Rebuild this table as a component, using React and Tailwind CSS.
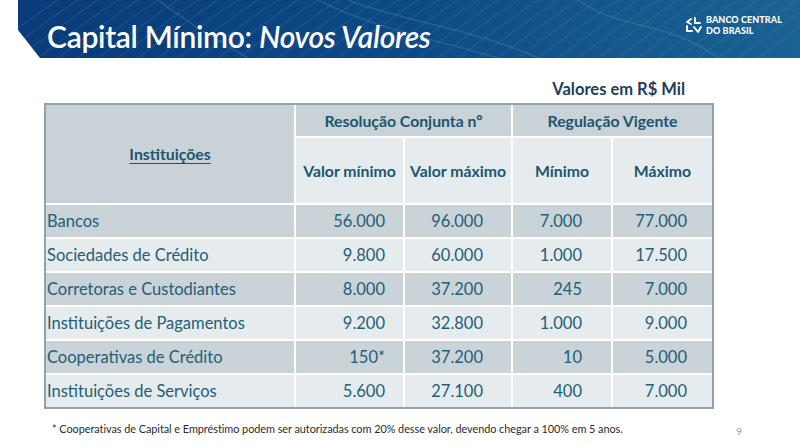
import React from "react";

const rows = [
  ["Bancos", "56.000", "96.000", "7.000", "77.000"],
  ["Sociedades de Crédito", "9.800", "60.000", "1.000", "17.500"],
  ["Corretoras e Custodiantes", "8.000", "37.200", "245", "7.000"],
  ["Instituições de Pagamentos", "9.200", "32.800", "1.000", "9.000"],
  ["Cooperativas de Crédito", "150*", "37.200", "10", "5.000"],
  ["Instituições de Serviços", "5.600", "27.100", "400", "7.000"],
];

function Logo() {
  return (
    <div className="flex items-center gap-[3px]">
      <svg width="18" height="18" viewBox="0 0 18 18" fill="none" stroke="white" strokeWidth="1.9" strokeLinecap="round" strokeLinejoin="round">
        <path d="M6 3 L2 6 L6 8" />
        <path d="M10 2 L10 7 L15 7" />
        <path d="M2 10 L2 15 L7 15" />
        <path d="M9 11 L13 16 L16 11" />
      </svg>
      <div className="flex flex-col text-white font-black text-[9px] tracking-[0.1px]" style={{ fontFamily: 'Lato, sans-serif' }}>
        <span className="leading-[11px]">BANCO CENTRAL</span>
        <span className="leading-[11px]">DO BRASIL</span>
      </div>
    </div>
  );
}

function Banner() {
  return (
    <div className="relative ml-[18px] h-[58px] overflow-hidden bg-gradient-to-r from-[#0a3a7a] via-[#0d4a85] to-[#1a6393] [clip-path:polygon(0_0,100%_0,100%_100%,22px_100%,0_30px)]">
      <svg className="absolute inset-0 w-full h-full" viewBox="0 0 782 58" preserveAspectRatio="none" fill="none">
        <g stroke="#4a86b8" strokeOpacity="0.35" strokeWidth="1">
          {Array.from({ length: 40 }).map((_, i) => (
            <path key={i} d={`M${i * 20 - 40} 58 Q ${i * 20 + 10} 20 ${i * 20 + 40} 0`} />
          ))}
        </g>
        <g stroke="#6aa2cc" strokeOpacity="0.25" strokeWidth="1.5">
          <path d="M300 0 C 360 30, 420 40, 480 58" />
          <path d="M330 0 C 380 20, 460 30, 520 58" />
          <path d="M560 0 C 600 30, 650 20, 700 58" />
          <path d="M140 0 C 180 30, 200 40, 230 58" />
        </g>
      </svg>
      <div className="relative flex items-center justify-between h-full pl-[29px] pr-[18px]">
        <h1 className="text-white text-[30px] leading-none pt-[13px] font-semibold tracking-[-0.3px]" style={{ fontFamily: 'Lato, "Open Sans", sans-serif' }}>
          Capital Mínimo: <span className="italic">Novos Valores</span>
        </h1>
        <div className="self-start pt-[14px]">
          <Logo />
        </div>
      </div>
    </div>
  );
}

export default function App() {
  const font = { fontFamily: 'Lato, "Open Sans", sans-serif' };
  const cell = "flex items-center text-[16.5px] text-[#225f79]";
  const hdr = "flex items-center justify-center font-bold text-[15.8px] text-[#1b5670]";
  const pads = ["pr-[18px]", "pr-[28px]", "pr-[29px]", "pr-[25px]"];
  return (
    <div className="w-[800px] h-[445px] bg-white overflow-hidden" style={font}>
      <Banner />
      <div className="flex justify-end w-[712px] pt-[21px] pb-[4px] pr-[27px]">
        <span className="font-bold text-[16.5px] text-[#1d3f58] leading-[20px]">Valores em R$ Mil</span>
      </div>
      <div className="ml-[44px] w-[670px] border-2 border-[#8da4ad] bg-white">
        <div className="grid grid-cols-[248px_107px_106px_98px_99px] grid-rows-[31px_65px_repeat(6,32px)] gap-[2px]">
          <div className={`${hdr} row-span-2 bg-[#c9d2d6] underline underline-offset-[3px]`}>Instituições</div>
          <div className={`${hdr} col-span-2 bg-[#c9d2d6]`}>Resolução Conjunta nº</div>
          <div className={`${hdr} col-span-2 bg-[#c9d2d6]`}>Regulação Vigente</div>
          <div className={`${hdr} bg-[#e6ebed]`}>Valor mínimo</div>
          <div className={`${hdr} bg-[#e6ebed]`}>Valor máximo</div>
          <div className={`${hdr} bg-[#e6ebed]`}>Mínimo</div>
          <div className={`${hdr} bg-[#e6ebed]`}>Máximo</div>
          {rows.map((r, i) => {
            const bg = i % 2 === 0 ? "bg-[#cad3d7]" : "bg-[#e6ebed]";
            return (
              <React.Fragment key={i}>
                <div className={`${cell} ${bg} pl-[1px]`}>{r[0]}</div>
                {r.slice(1).map((v, j) => (
                  <div key={j} className={`${cell} ${bg} justify-end ${pads[j]}`}>{v}</div>
                ))}
              </React.Fragment>
            );
          })}
        </div>
      </div>
      <div className="flex items-center w-[800px] pt-[11px]">
        <span className="pl-[52px] text-[10.9px] tracking-[-0.05px] text-[#2b2b2b]">
          * Cooperativas de Capital e Empréstimo podem ser autorizadas com 20% desse valor, devendo chegar a 100% em 5 anos.
        </span>
        <span className="ml-auto mr-[58px] text-[10px] text-[#9a9a9a] pt-[4px]">9</span>
      </div>
    </div>
  );
}
